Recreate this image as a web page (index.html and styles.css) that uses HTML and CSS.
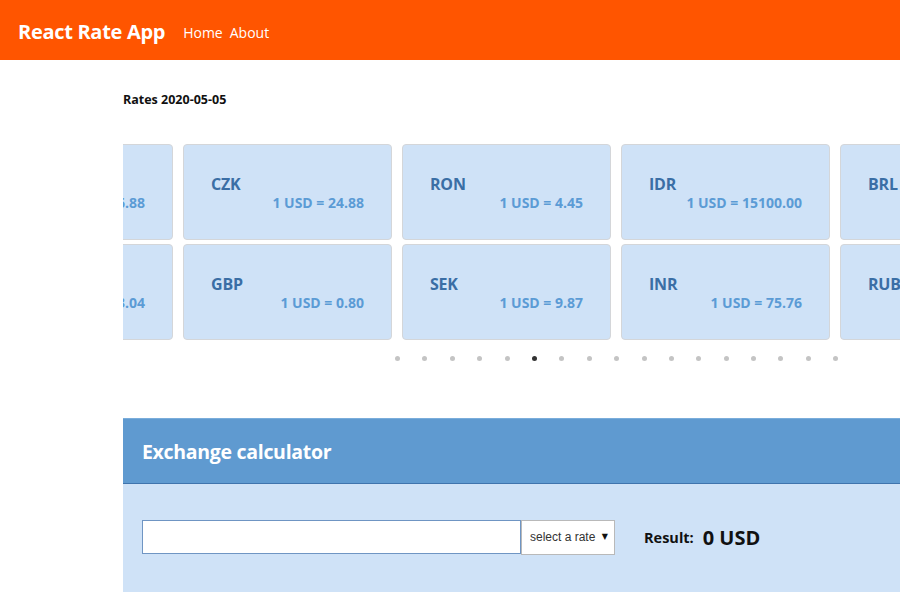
FILE: index.html
```html
<!DOCTYPE html>
<html>
<head>
<meta charset="utf-8">
<link rel="stylesheet" href="styles.css">
</head>
<body>
<header class="topbar">
  <span class="brand">React Rate App</span>
  <nav class="nav"><a href="#">Home</a><a href="#">About</a></nav>
</header>
<main class="main">
  <h2 class="rates-title">Rates 2020-05-05</h2>
  <div class="carousel">
    <div class="track">
      <div class="col">
        <div class="card"><div class="cur">MXN</div><div class="val">1 USD = 16.88</div></div>
        <div class="card"><div class="cur">PLN</div><div class="val">1 USD = 3.04</div></div>
      </div>
      <div class="col">
        <div class="card"><div class="cur">CZK</div><div class="val">1 USD = 24.88</div></div>
        <div class="card"><div class="cur">GBP</div><div class="val">1 USD = 0.80</div></div>
      </div>
      <div class="col">
        <div class="card"><div class="cur">RON</div><div class="val">1 USD = 4.45</div></div>
        <div class="card"><div class="cur">SEK</div><div class="val">1 USD = 9.87</div></div>
      </div>
      <div class="col">
        <div class="card"><div class="cur">IDR</div><div class="val">1 USD = 15100.00</div></div>
        <div class="card"><div class="cur">INR</div><div class="val">1 USD = 75.76</div></div>
      </div>
      <div class="col">
        <div class="card"><div class="cur">BRL</div><div class="val">1 USD = 5.66</div></div>
        <div class="card"><div class="cur">RUB</div><div class="val">1 USD = 74.83</div></div>
      </div>
    </div>
  </div>
  <div class="dots">
    <span class="dot"></span><span class="dot"></span><span class="dot"></span><span class="dot"></span><span class="dot"></span><span class="dot active"></span><span class="dot"></span><span class="dot"></span><span class="dot"></span><span class="dot"></span><span class="dot"></span><span class="dot"></span><span class="dot"></span><span class="dot"></span><span class="dot"></span><span class="dot"></span><span class="dot"></span>
  </div>
  <section class="calc">
    <div class="calc-head">Exchange calculator</div>
    <div class="calc-body">
      <input class="amount" type="text">
      <div class="select-wrap">
        <select class="rate-select"><option>select a rate</option></select>
        <span class="arrow">▼</span>
      </div>
      <span class="result-label">Result:</span>
      <span class="result-val">0 USD</span>
    </div>
  </section>
</main>
</body>
</html>
```
FILE: styles.css
```css
html, body {
  margin: 0;
  padding: 0;
  overflow: hidden;
  background: #fff;
  font-family: "Open Sans", "Noto Sans", sans-serif;
}
.topbar {
  height: 60px;
  background: #ff5500;
  display: flex;
  align-items: center;
  padding-left: 18px;
  padding-top: 3px;
  box-sizing: border-box;
}
.brand {
  color: #fff;
  font-weight: 700;
  font-size: 20px;
  letter-spacing: -0.3px;
}
.nav {
  margin-left: 18px;
  display: flex;
  gap: 7px;
  padding-top: 1px;
}
.nav a {
  color: #fff;
  text-decoration: none;
  font-size: 14px;
}
.main {
  padding-left: 123px;
}
.rates-title {
  margin: 0;
  padding-top: 31px;
  font-size: 12.5px;
  font-weight: 700;
  color: #111;
  line-height: 18px;
}
.carousel {
  margin-top: 35px;
  overflow: hidden;
}
.track {
  display: flex;
  gap: 10px;
  transform: translateX(-159px);
}
.col {
  display: flex;
  flex-direction: column;
  gap: 4px;
  flex: 0 0 209px;
}
.card {
  height: 96px;
  box-sizing: border-box;
  background: #cfe2f7;
  border: 1px solid #d4d6d9;
  border-radius: 4px;
  padding: 28px 27px 0 27px;
  display: flex;
  flex-direction: column;
}
.cur {
  font-size: 16px;
  font-weight: 700;
  color: #3a6ea5;
  line-height: 22px;
  letter-spacing: -0.2px;
}
.val {
  align-self: flex-end;
  font-size: 14px;
  font-weight: 700;
  color: #5b9bd5;
  line-height: 18px;
  margin-top: -1px;
}
.dots {
  display: flex;
  gap: 22.4px;
  margin-top: 16px;
  padding-left: 272px;
  height: 5px;
}
.dot {
  width: 5px;
  height: 5px;
  border-radius: 50%;
  background: #c4c4c4;
  flex: 0 0 5px;
}
.dot.active {
  background: #333;
}
.calc {
  margin-top: 57px;
  width: 800px;
}
.calc-head {
  height: 64px;
  background: #5f9ad0;
  border-top: 1px solid #7aaddb;
  border-bottom: 1px solid #3f74ad;
  color: #fff;
  font-size: 19.5px;
  font-weight: 700;
  display: flex;
  align-items: center;
  padding-left: 19px;
  letter-spacing: -0.3px;
}
.calc-body {
  height: 108px;
  background: #cfe2f7;
  display: flex;
  align-items: center;
  padding-left: 19px;
  box-sizing: border-box;
  padding-bottom: 2px;
}
.amount {
  width: 379px;
  height: 34px;
  box-sizing: border-box;
  border: 1px solid #6f95c3;
  background: #fff;
  margin: 0;
  outline: none;
}
.select-wrap {
  position: relative;
  width: 94px;
  height: 35px;
}
.rate-select {
  appearance: none;
  -webkit-appearance: none;
  width: 94px;
  height: 35px;
  box-sizing: border-box;
  border: 1px solid #b9b9b9;
  border-radius: 0;
  background: #fff;
  font-family: "Liberation Sans", Arial, sans-serif;
  font-size: 12px;
  color: #333;
  margin: 0;
  padding: 0 0 0 8px;
}
.arrow {
  position: absolute;
  right: 7px;
  top: 12px;
  font-size: 8px;
  color: #111;
  pointer-events: none;
  font-family: "DejaVu Sans", sans-serif;
}
.result-label {
  margin-left: 29px;
  font-size: 14.5px;
  font-weight: 700;
  color: #111;
}
.result-val {
  margin-left: 9px;
  font-size: 20px;
  font-weight: 700;
  color: #111;
}
```
